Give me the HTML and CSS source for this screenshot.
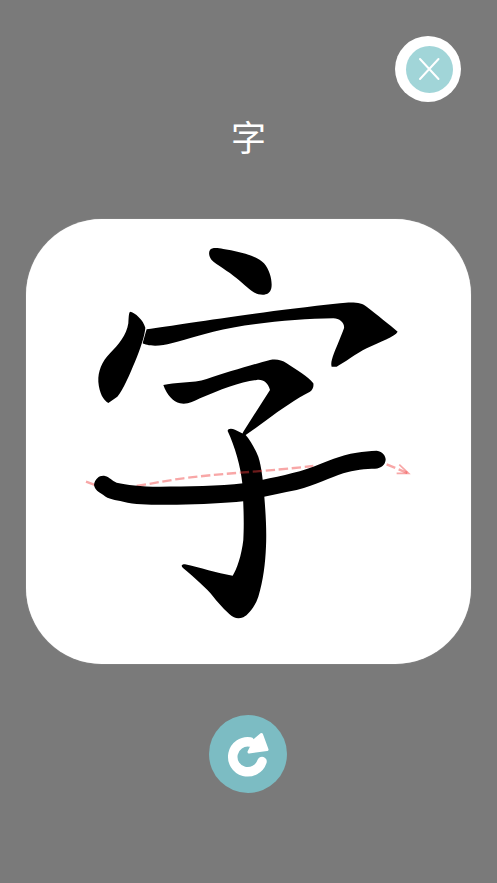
FILE: index.html
```html
<!DOCTYPE html>
<html lang="zh">
<head>
    <meta charset="UTF-8">
    <meta name="viewport" content="width=device-width, initial-scale=1.0">
    <title>字</title>
    <link rel="stylesheet" href="styles.css">
</head>
<body>
    <div class="screen">
        <button class="close-btn" type="button" aria-label="Close">
            <span class="close-inner">
                <svg class="close-icon" viewBox="0 0 47 47">
                    <path d="M14 13 L32.5 33 M32.5 13 L14 33"/>
                </svg>
            </span>
        </button>

        <h1 class="title">字</h1>

        <div class="card">
            <svg class="glyph" viewBox="26 219 445 445">
                <!-- upper strokes -->
                <g transform="translate(80 235) scale(0.3333)">
                    <path d="M390 45 C395 38 410 38 430 42 C480 50 530 62 552 85 C570 105 578 140 574 160 C570 178 555 182 535 178 C515 172 495 150 470 130 C445 108 410 90 395 75 C387 65 385 52 390 45Z"/>
                    <path d="M150 230 C165 232 190 255 196 278 C195 300 180 345 165 380 C150 415 130 465 112 485 L85 504 C70 495 58 475 55 440 C54 410 65 380 90 355 C115 330 140 300 145 265 C146 250 146 235 150 230Z"/>
                    <path d="M200 283 C300 270 500 235 780 205 C820 200 845 203 860 215 C890 238 930 270 953 290 C945 305 900 320 860 340 C830 355 790 385 770 395 L755 395 C752 385 755 375 762 355 C770 335 785 300 792 280 C795 265 780 250 760 250 C650 252 500 265 400 290 C340 305 280 325 250 330 C220 335 195 330 188 325 C192 310 196 295 200 283Z"/>
                    <path d="M250 450 C280 442 340 445 380 432 C440 412 520 388 570 375 C590 372 605 375 620 385 C650 405 685 425 700 445 C702 455 698 465 690 470 C650 490 600 525 560 555 C530 577 505 595 480 612 L490 590 L570 465 C565 445 550 432 530 435 C480 440 420 465 360 490 C340 500 320 510 300 505 C280 500 260 480 250 450Z"/>
                </g>
                <g transform="translate(80 430) scale(0.3333)">
                    <!-- stem with hook -->
                    <path d="M443 3 C443 -5 455 -5 465 -1 L497 15 C510 30 525 55 535 80 C545 110 550 160 553 200 C558 260 560 310 558 350 C556 400 550 450 535 500 C525 530 505 555 490 562 C480 566 470 566 462 562 C445 552 420 525 400 500 C380 475 340 440 310 415 C303 408 303 403 315 403 C360 412 410 430 458 437 C470 420 485 375 490 330 C492 290 492 250 487 160 C482 110 465 50 443 3Z"/>
                    <!-- guide sits over the stem but under the bar -->
                    <path class="guide" d="M18 155 L50 167 M170 168 C220 160 270 150 310 145 C380 136 430 132 480 128 C560 122 640 115 700 108 M920 103 L985 130"/>
                    <path class="guide guide-solid" d="M958 104 L986 130 L950 130"/>
                    <path d="M42 165 C45 145 60 135 75 138 C90 142 95 152 110 158 C140 165 180 170 240 170 C320 170 420 168 490 160 C560 147 640 132 700 110 C740 95 780 75 830 68 C850 65 870 62 890 62 C910 65 918 80 917 90 C915 105 905 115 885 116 C860 116 820 120 790 130 C750 143 710 165 650 180 C600 190 550 200 490 214 C430 220 350 225 270 224 C220 224 170 225 130 215 C105 210 85 208 70 195 C55 185 45 180 42 165Z"/>
                </g>
            </svg>
        </div>

        <button class="replay-btn" type="button" aria-label="Replay">
            <svg class="replay-icon" viewBox="0 0 78 78">
                <path class="replay-arc" d="M53 46.5 A15 15 0 1 1 41 27"/>
                <path class="replay-head" d="M52.5 19.5 L58 34.5 L40 37 L46 25Z"/>
            </svg>
        </button>
    </div>
</body>
</html>
```

FILE: styles.css
```css
/* General Reset */
* {
    margin: 0;
    padding: 0;
    box-sizing: border-box;
}

body {
    background-color: #7a7a7a;
    font-family: "Noto Sans CJK SC", "Noto Sans", sans-serif;
}

.screen {
    display: flex;
    flex-direction: column;
    align-items: center;
    height: 883px;
    padding-top: 36px;
    overflow: hidden;
}

button {
    border: none;
    cursor: pointer;
}

/* Close button */
.close-btn {
    display: flex;
    align-items: center;
    justify-content: center;
    align-self: flex-end;
    width: 66px;
    height: 66px;
    margin-right: 36px;
    padding-left: 3px;
    background-color: #fff;
    border-radius: 50%;
}

.close-inner {
    display: block;
    width: 47px;
    height: 47px;
    background-color: #a1d5d8;
    border-radius: 50%;
}

.close-icon {
    display: block;
    width: 47px;
    height: 47px;
    fill: none;
    stroke: #fff;
    stroke-width: 2;
    stroke-linecap: round;
}

/* Title */
.title {
    margin-top: 9px;
    color: #fff;
    font-size: 35px;
    font-weight: 400;
    line-height: 50px;
}

/* Writing card */
.card {
    width: 445px;
    height: 445px;
    margin-top: 58px;
    background-color: #fff;
    border-radius: 76px;
    box-shadow: 0 0 1px rgba(255, 255, 255, 0.5);
}

.glyph {
    display: block;
    width: 100%;
    height: 100%;
    fill: #000;
}

.guide {
    fill: none;
    stroke: rgba(240, 60, 60, 0.45);
    stroke-width: 7;
    stroke-dasharray: 28 11;
}

.guide-solid {
    stroke-width: 5;
    stroke-dasharray: none;
}

/* Replay button */
.replay-btn {
    width: 78px;
    height: 78px;
    margin-top: 51px;
    margin-right: 1px;
    background-color: #7cbcc3;
    border-radius: 50%;
}

.replay-icon {
    display: block;
    width: 78px;
    height: 78px;
}

.replay-arc {
    fill: none;
    stroke: #fff;
    stroke-width: 9.5;
    stroke-linecap: round;
}

.replay-head {
    fill: #fff;
    stroke: #fff;
    stroke-width: 3;
    stroke-linejoin: round;
}
```
